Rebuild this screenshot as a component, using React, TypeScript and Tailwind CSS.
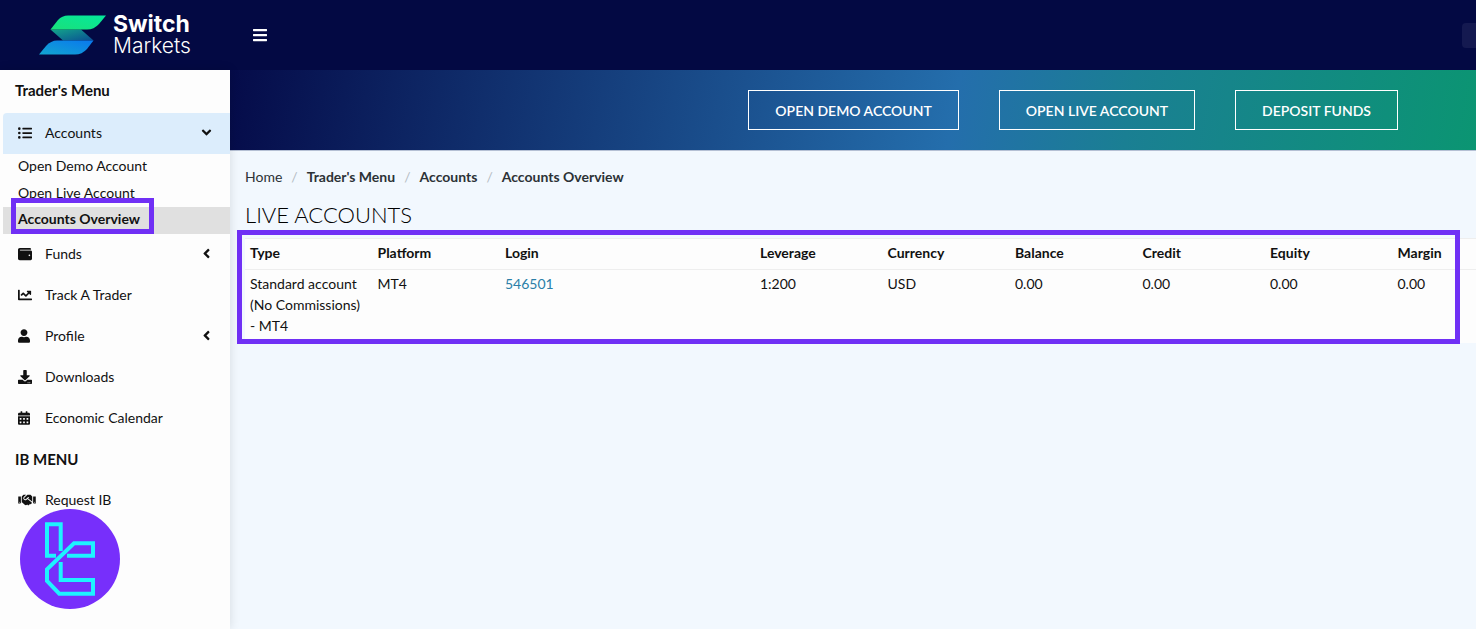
import React from "react";
import {
  FaListUl, FaWallet, FaChartLine, FaUser, FaDownload, FaCalendarAlt, FaHandshake,
  FaAngleDown, FaAngleLeft, FaBars,
} from "react-icons/fa";
import type { IconType } from "react-icons";

function NavRow({ icon: Icon, label, trailing: Trailing, active, iconWidth = "w-[14px]" }: {
  icon: IconType; label: string; trailing?: IconType; active?: boolean; iconWidth?: string;
}) {
  return (
    <a href="#" className={`ml-[3px] flex h-[41px] items-center pb-[2px] pl-[15px] pr-[16px] ${active ? "rounded-tl-sm bg-[#dcedfc]" : ""}`}>
      <span className="flex w-[27px] shrink-0 items-center"><Icon className={`h-[14px] ${iconWidth}`} /></span>
      <span className="flex-1 whitespace-nowrap">{label}</span>
      {Trailing && <Trailing className="size-[15px]" />}
    </a>
  );
}

function BrandLogo() {
  return (
    <a href="#" className="flex w-[230px] shrink-0 items-center gap-[7px] pl-[39px] text-white" aria-label="Switch Markets">
      <svg viewBox="0 0 67 40" className="h-[40px] w-[67px]">
        <defs>
          <linearGradient id="top" x1="0" y1="1" x2="1" y2="0"><stop offset="0" stopColor="#1ae07a" /><stop offset="1" stopColor="#04e89c" /></linearGradient>
          <linearGradient id="mid" x1="0" y1="0" x2="1" y2="1"><stop offset="0" stopColor="#13a58a" /><stop offset="1" stopColor="#0a4f94" /></linearGradient>
          <linearGradient id="low" x1="0" y1="1" x2="1" y2="0"><stop offset="0" stopColor="#12a5d0" /><stop offset="1" stopColor="#0a78ee" /></linearGradient>
        </defs>
        <path d="M11.500 14.500L24 25.500H54.500L42 14.500Z" fill="url(#mid)" />
        <path d="M11.500 14.500L19 5Q23 .5 29 .5H67L60 9Q55 14.500 48 14.500Z" fill="url(#top)" />
        <path d="M54.500 25.500L48 34Q43 39.500 36 39.500H0L7 31Q12 25.500 18 25.500Z" fill="url(#low)" />
      </svg>
      <span className="flex flex-col font-['Inter',sans-serif] leading-[22px]">
        <span className="text-[23px] font-bold">Switch</span>
        <span className="text-[21px] font-light">Markets</span>
      </span>
    </a>
  );
}

const actions = ["OPEN DEMO ACCOUNT", "OPEN LIVE ACCOUNT", "DEPOSIT FUNDS"];
const columns = ["Type", "Platform", "Login", "Leverage", "Currency", "Balance", "Credit", "Equity", "Margin"];
const row = ["Standard account (No Commissions) - MT4", "MT4", "546501", "1:200", "USD", "0.00", "0.00", "0.00", "0.00"];

export default function App() {
  return (
    <div className="flex min-h-screen flex-col overflow-hidden bg-[#f2f8fe] font-['Lato',sans-serif] text-[14px] leading-[21px] text-[#111]">
      <header className="flex h-[70px] items-center bg-[#030943]">
        <BrandLogo />
        <button type="button" aria-label="Toggle menu" className="ml-[22px] text-white"><FaBars className="size-[16px]" /></button>
        <button type="button" aria-label="Profile" className="ml-auto h-[25px] w-[14px] rounded-l bg-[#141950]" />
      </header>
      <div className="flex flex-1">
        <aside className="relative z-10 w-[230px] shrink-0 bg-[#fdfdfd] shadow-[0_0_10px_rgba(0,0,0,0.12)]">
          <h2 className="flex h-[43px] items-center pb-[2px] pl-[15px] text-[15px] font-bold">Trader's Menu</h2>
          <nav>
            <NavRow icon={FaListUl} label="Accounts" trailing={FaAngleDown} active />
            <div className="ml-[3px] flex h-[80px] flex-col leading-6">
              <a href="#" className="flex-1 pl-[15px]">Open Demo Account</a>
              <a href="#" className="flex-1 pl-[15px]">Open Live Account</a>
              <a href="#" className="relative flex-1 bg-[#e0e0e0] pl-[15px] font-bold">
                Accounts Overview
                <span className="absolute -top-[9px] bottom-0 left-[8px] w-[143px] border-[5px] border-[#7030f5]" />
              </a>
            </div>
            <NavRow icon={FaWallet} label="Funds" trailing={FaAngleLeft} />
            <NavRow icon={FaChartLine} label="Track A Trader" />
            <NavRow icon={FaUser} label="Profile" trailing={FaAngleLeft} iconWidth="w-[12px]" />
            <NavRow icon={FaDownload} label="Downloads" />
            <NavRow icon={FaCalendarAlt} label="Economic Calendar" iconWidth="w-[12px]" />
            <h2 className="flex h-[41px] items-center pl-[15px] text-[15px] font-bold">IB MENU</h2>
            <NavRow icon={FaHandshake} label="Request IB" iconWidth="w-[18px]" />
          </nav>
          <svg viewBox="0 0 100 100" className="absolute bottom-[20px] left-[20px] size-[100px]">
            <circle cx="50" cy="50" r="50" fill="#772ffb" />
            <g fill="none" stroke="#1df3ff" strokeWidth="4">
              <path d="M36 46.700H27V15.300H40.700V42" />
              <path d="M47 46.700H73V34.300H54L27 60.300V72L39.300 84.700H73V71H40.700V53" />
            </g>
          </svg>
        </aside>
        <main className="min-w-0 flex-1">
          <div className="flex h-[81px] items-center justify-end gap-[40px] border-b border-[#b5c0d4] bg-[linear-gradient(100deg,#050b49_0%,#246eac_58%,#1a7f93_72%,#0b9572_100%)] pr-[78px] text-white">
            {actions.map((a) => (
              <button key={a} type="button" className="h-[40px] border border-white px-[26px] font-semibold">{a}</button>
            ))}
          </div>
          <nav aria-label="Breadcrumb" className="flex gap-[9px] pl-[15px] pt-[15px] font-bold text-[#2c3236]">
            <a href="#" className="font-normal">Home</a>
            <span className="font-normal text-[#b5bcc4]">/</span>
            <a href="#">Trader's Menu</a>
            <span className="font-normal text-[#b5bcc4]">/</span>
            <a href="#">Accounts</a>
            <span className="font-normal text-[#b5bcc4]">/</span>
            <span>Accounts Overview</span>
          </nav>
          <h1 className="pl-[15px] pt-[15px] text-[22px] font-light leading-[26px] text-black">LIVE ACCOUNTS</h1>
          <div className="relative mt-[10px] pl-[15px]">
            <div className="overflow-hidden">
              <table className="w-full min-w-[1275px] table-fixed border-collapse bg-[#fdfdfd] text-left">
                <thead>
                  <tr className="border-y border-[#eeeeee]">
                    {columns.map((c) => (
                      <th key={c} className={`px-[5px] pb-[6px] pt-[3px] ${c === "Login" ? "w-[20%]" : "w-[10%]"}`}>{c}</th>
                    ))}
                  </tr>
                </thead>
                <tbody>
                  <tr className="align-top">
                    {row.map((v, i) => (
                      <td key={i} className="pb-[7px] pl-[5px] pr-[10px] pt-[3px]">
                        {i === 2 ? <a href="#" className="text-[#2b7fa8]">{v}</a> : v}
                      </td>
                    ))}
                  </tr>
                </tbody>
              </table>
            </div>
            <div className="pointer-events-none absolute -top-[8px] -bottom-[1px] left-[7px] right-[16px] border-[5px] border-[#7030f5]" />
          </div>
        </main>
      </div>
    </div>
  );
}
